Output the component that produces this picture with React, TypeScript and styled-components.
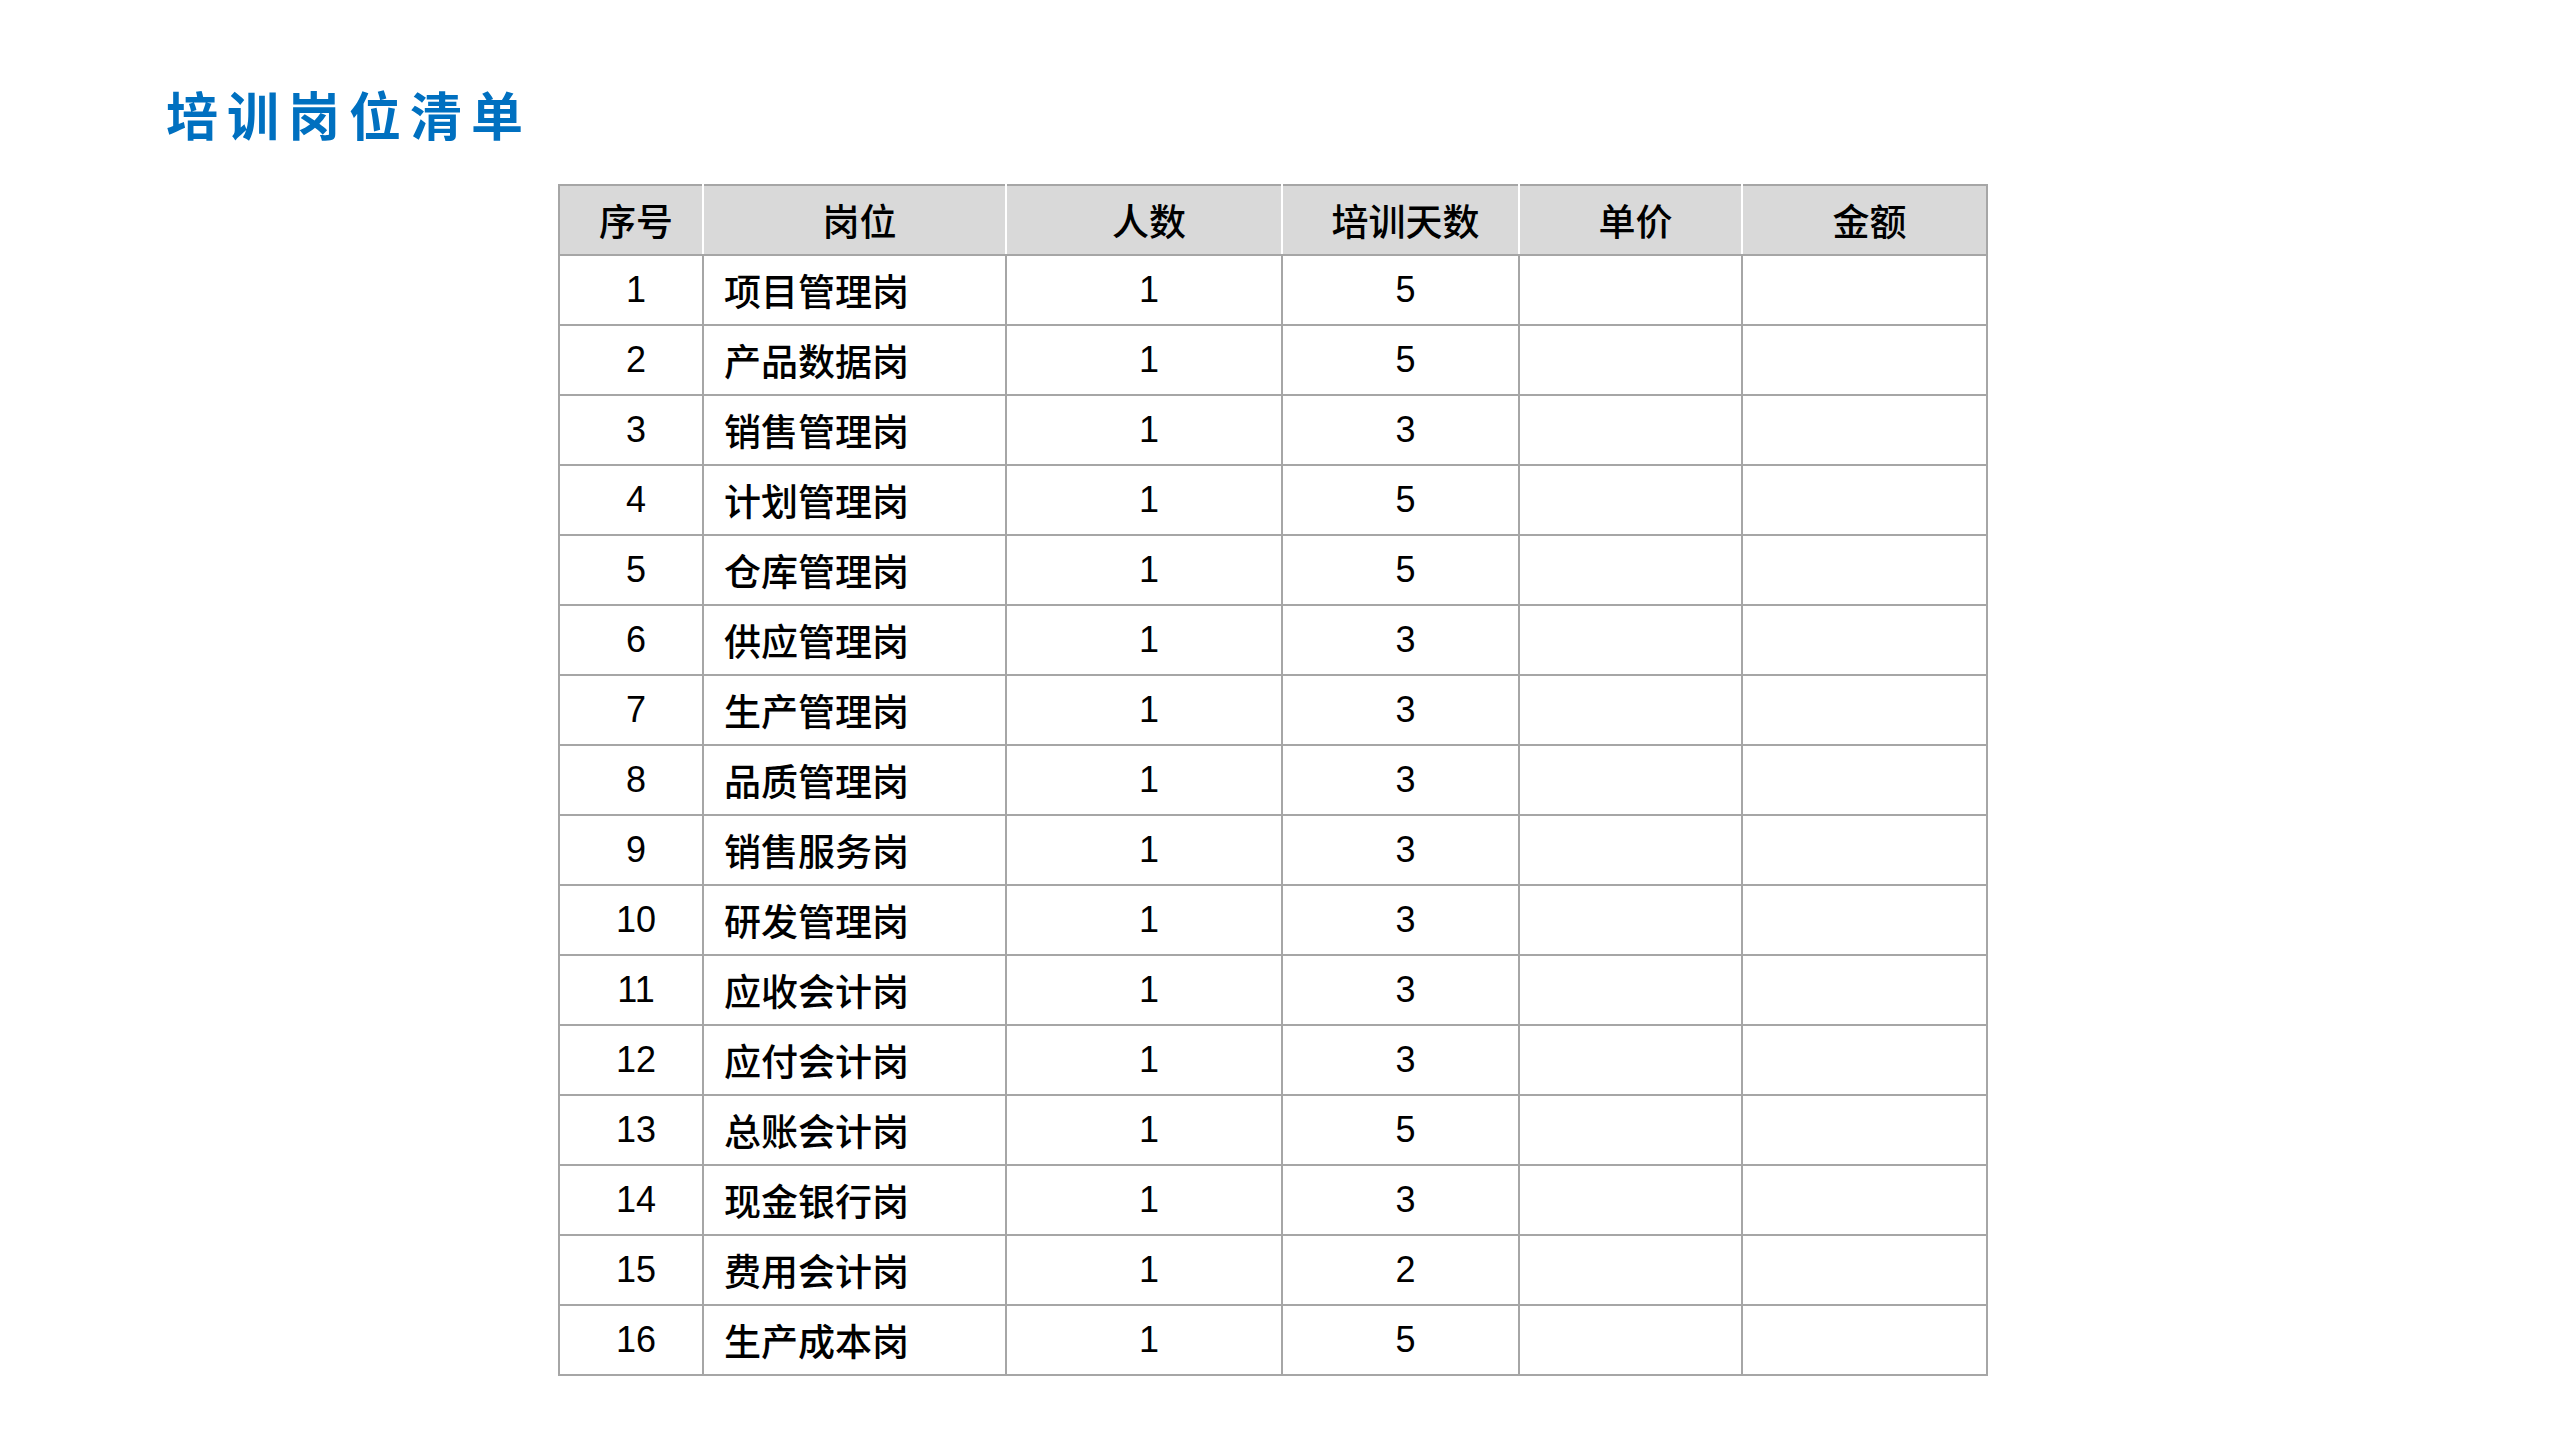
import React from "react";
import styled, { createGlobalStyle } from "styled-components";

const GlobalStyle = createGlobalStyle`
  html, body {
    margin: 0;
    padding: 0;
    background: #ffffff;
  }
  body {
    font-family: "Noto Sans CJK SC", "Noto Sans", sans-serif;
  }
`;

const Page = styled.div`
  width: 2560px;
  height: 1440px;
  box-sizing: border-box;
  padding-top: 88px;
  background: #ffffff;
  overflow: hidden;
`;

const Title = styled.h1`
  margin: 0 0 0 166px;
  font-family: "Noto Sans CJK SC", sans-serif;
  font-size: 52px;
  line-height: 52px;
  font-weight: 700;
  letter-spacing: 9px;
  color: #0070c0;
`;

const Table = styled.table`
  margin: 44px 0 0 558px;
  width: 1428px;
  table-layout: fixed;
  border-collapse: collapse;
  font-family: "Liberation Sans", "Noto Sans CJK SC", sans-serif;
  font-size: 36px;
  color: #000000;
`;

const HeadRow = styled.tr`
  height: 70px;
  background: #d9d9d9;
`;

const Th = styled.th`
  font-family: "Noto Sans CJK SC", sans-serif;
  font-size: 37px;
  font-weight: 500;
  text-align: center;
  padding: 0 0 0 10px;
  border-top: 2px solid #a6a6a6;
  border-bottom: 2px solid #a6a6a6;
  border-left: 2px solid #ffffff;
  border-right: 2px solid #ffffff;

  &:first-child {
    border-left-color: #a6a6a6;
  }
  &:last-child {
    border-right-color: #a6a6a6;
  }
`;

const Row = styled.tr`
  height: 70px;
`;

const Td = styled.td<{ $align?: "left" | "center" }>`
  border: 2px solid #a6a6a6;
  padding: ${(p) => (p.$align === "left" ? "0 0 0 20px" : "0 0 0 10px")};
  text-align: ${(p) => p.$align || "center"};
  font-weight: 400;
`;

const Post = styled.span`
  font-family: "Noto Sans CJK SC", sans-serif;
  font-size: 37px;
  font-weight: 500;
`;

const columns = [144, 303, 276, 237, 223, 245];
const headers = ["序号", "岗位", "人数", "培训天数", "单价", "金额"];

const rows: [string, number][] = [
  ["项目管理岗", 5],
  ["产品数据岗", 5],
  ["销售管理岗", 3],
  ["计划管理岗", 5],
  ["仓库管理岗", 5],
  ["供应管理岗", 3],
  ["生产管理岗", 3],
  ["品质管理岗", 3],
  ["销售服务岗", 3],
  ["研发管理岗", 3],
  ["应收会计岗", 3],
  ["应付会计岗", 3],
  ["总账会计岗", 5],
  ["现金银行岗", 3],
  ["费用会计岗", 2],
  ["生产成本岗", 5],
];

export default function App() {
  return (
    <>
      <GlobalStyle />
      <Page>
        <Title>培训岗位清单</Title>
        <Table>
          <colgroup>
            {columns.map((w, i) => (
              <col key={i} style={{ width: w }} />
            ))}
          </colgroup>
          <thead>
            <HeadRow>
              {headers.map((h) => (
                <Th key={h}>{h}</Th>
              ))}
            </HeadRow>
          </thead>
          <tbody>
            {rows.map(([post, days], i) => (
              <Row key={post}>
                <Td>{i + 1}</Td>
                <Td $align="left">
                  <Post>{post}</Post>
                </Td>
                <Td>1</Td>
                <Td>{days}</Td>
                <Td />
                <Td />
              </Row>
            ))}
          </tbody>
        </Table>
      </Page>
    </>
  );
}
